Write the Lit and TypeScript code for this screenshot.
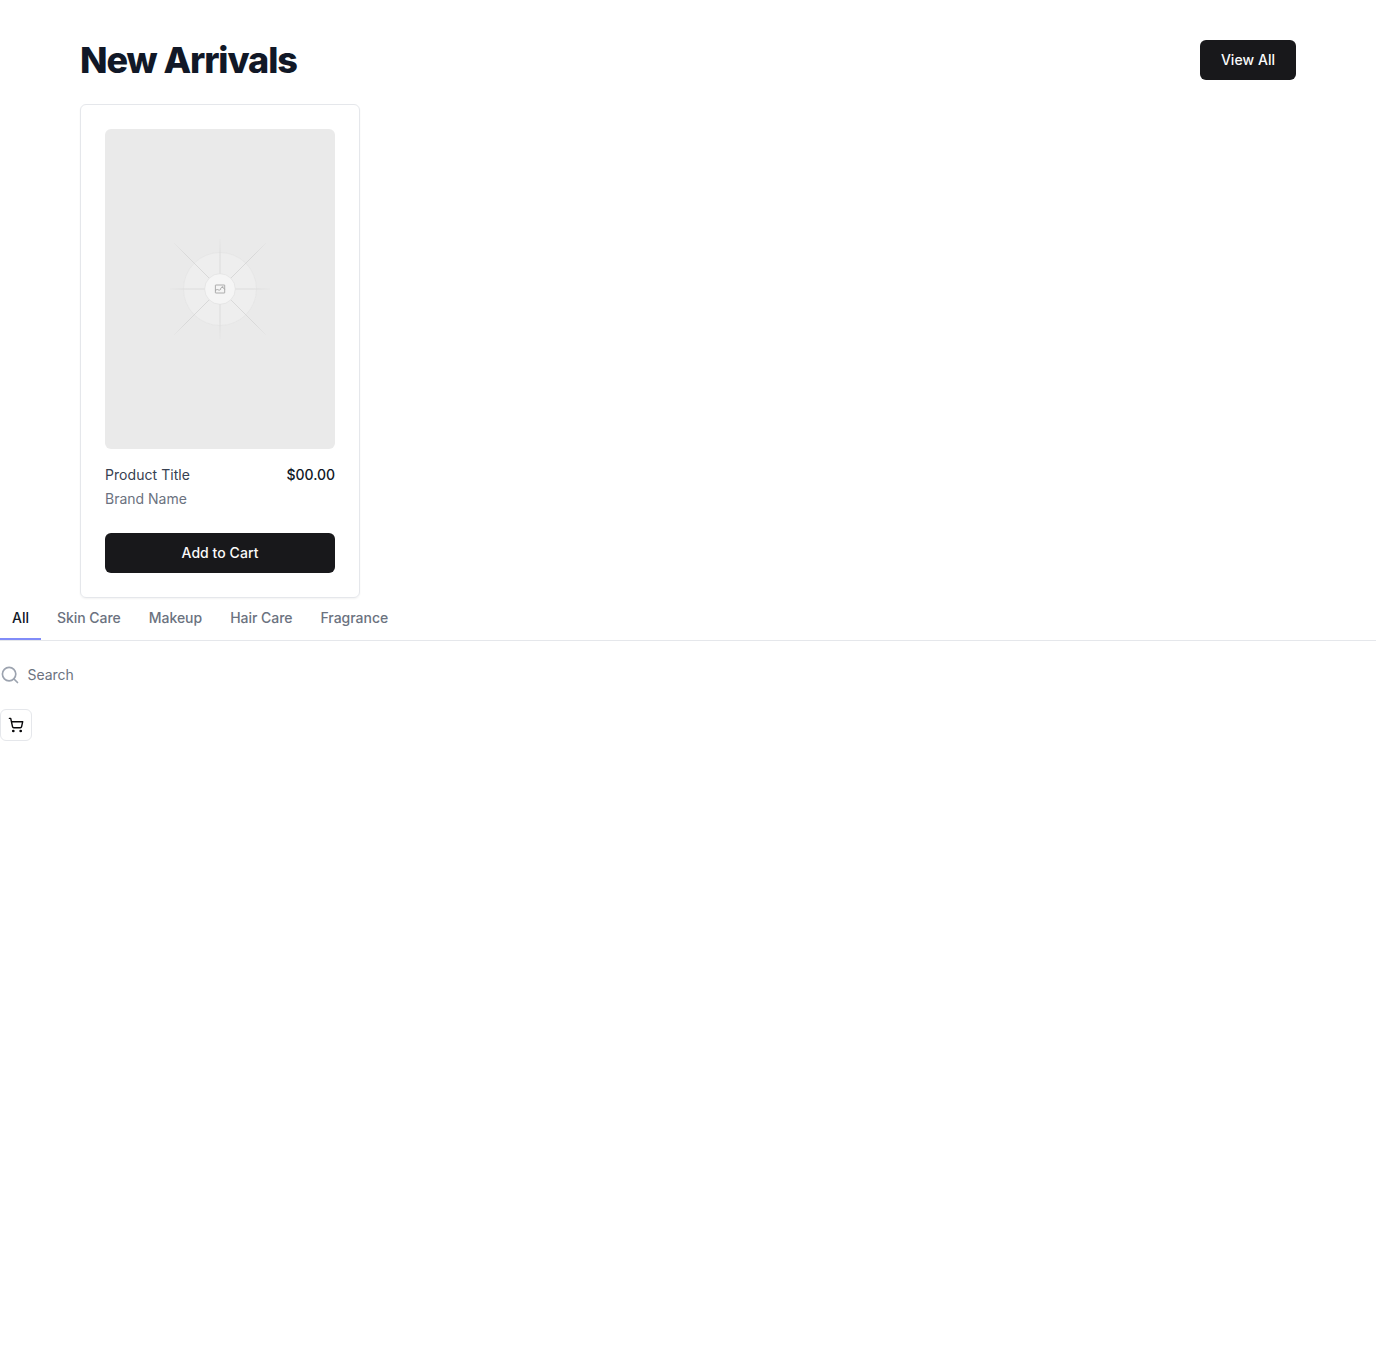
import { LitElement, html, svg, css } from "lit";
import { customElement, property } from "lit/decorators.js";
import { classMap } from "lit/directives/class-map.js";

const TABS = ["All", "Skin Care", "Makeup", "Hair Care", "Fragrance"];

// End points of the four guide lines, relative to the centre of the artwork.
const RAYS = [
  [-50, 0, 50, 0],
  [0, -50, 0, 50],
  [-46, -46, 46, 46],
  [-46, 46, 46, -46],
];

@customElement("product-placeholder")
class ProductPlaceholder extends LitElement {
  static styles = css`
    :host { display: block; }
    .art { display: block; width: 100%; height: 320px; border-radius: 6px; background: #eaeaea; }
  `;
  render() {
    return html`
      <svg class="art" viewBox="-115 -160 230 320" fill="none">
        <defs>
          <radialGradient id="fade" gradientUnits="userSpaceOnUse" cx="0" cy="0" r="57">
            <stop offset="0" stop-color="#d4d4d4" />
            <stop offset="0.6" stop-color="#d7d7d7" />
            <stop offset="1" stop-color="#dcdcdc" stop-opacity="0" />
          </radialGradient>
          <radialGradient id="fade-diagonal" gradientUnits="userSpaceOnUse" cx="0" cy="0" r="70">
            <stop offset="0" stop-color="#d0d0d0" />
            <stop offset="0.7" stop-color="#d3d3d3" />
            <stop offset="1" stop-color="#d8d8d8" stop-opacity="0" />
          </radialGradient>
        </defs>
        <circle r="36.5" fill="#eeeeee" stroke="#e3e3e3" stroke-width="0.6" />
        ${RAYS.map(([a, b, c, d]) => svg`<line x1=${a} y1=${b} x2=${c} y2=${d} stroke=${b && a ? "url(#fade-diagonal)" : "url(#fade)"} stroke-width="0.75" />`)}
        <circle r="15.3" fill="#f5f5f5" stroke="#dedede" stroke-width="0.6" />
        <g stroke="#999" stroke-width="0.8">
          <rect x="-4.6" y="-4" width="9.3" height="8" rx="0.3" />
          <path d="M-4.6 1.2L-2.8 .5L-.8 1.2L.6 .5M.6 .5V-.4A1.8 1.8 0 0 1 3.8-.8L4.7 .5" />
          <path d="M1.8-2.2H3.4" />
        </g>
      </svg>
    `;
  }
}

@customElement("app-button")
class AppButton extends LitElement {
  static styles = css`
    :host { display: block; }
    .button {
      display: flex; align-items: center; justify-content: center;
      box-sizing: border-box; width: 100%; height: 40px; padding: 0 16px;
      border: 0; border-radius: 6px; background: #18181b; color: #fafafa;
      font: 500 14px/20px Inter, sans-serif; letter-spacing: 0.06px;
    }
  `;
  render() {
    return html`<button class="button"><slot></slot></button>`;
  }
}

@customElement("category-tabs")
class CategoryTabs extends LitElement {
  @property() active = "All";
  static styles = css`
    :host { display: block; }
    .tabs { display: flex; gap: 4px; height: 42px; border-bottom: 1px solid #e5e7eb; }
    .tab {
      box-sizing: border-box; height: 42px; padding: 10px 12px 10px;
      border: 0; border-bottom: 2px solid transparent; background: none;
      color: #6b7280; font: 500 14px/20px Inter, sans-serif; letter-spacing: -0.03px;
    }
    .active { color: #111827; border-bottom-color: #818cf8; }
  `;
  render() {
    return html`<nav class="tabs">
      ${TABS.map((t) => html`<button class=${classMap({ tab: true, active: t === this.active })}>${t}</button>`)}
    </nav>`;
  }
}

@customElement("app-root")
class AppRoot extends LitElement {
  static styles = css`
    :host { display: block; min-height: 1366px; background: #fff; color: #111827; font: 14px/20px Inter, sans-serif; }
    .arrivals { padding: 40px 80px 0; }
    .heading { display: flex; justify-content: space-between; align-items: center; }
    .title { margin: 0; font: 800 36px/40px Inter, sans-serif; letter-spacing: -1.08px; }
    .view { width: 96px; }
    .card {
      box-sizing: border-box; width: 280px; height: 494px; margin-top: 24px; padding: 24px;
      border: 1px solid #e5e7eb; border-radius: 6px; box-shadow: 0 1px 2px rgba(0, 0, 0, 0.05);
    }
    .row { display: flex; justify-content: space-between; margin-top: 16px; }
    .name { color: #374151; letter-spacing: 0.05px; }
    .price { font-weight: 500; letter-spacing: -0.04px; }
    .brand { margin: 4px 0 24px; color: #6b7280; }
    .search { display: flex; align-items: center; height: 20px; margin-top: 24px; gap: 7.5px; color: #6b7280; letter-spacing: -0.04px; }
    .glass { width: 20px; height: 20px; color: #9ca3af; }
    .cart {
      display: flex; align-items: center; justify-content: center; box-sizing: border-box;
      width: 32px; height: 32px; margin-top: 24px; padding: 0;
      border: 1px solid #e5e7eb; border-radius: 6px; background: #fff; color: #09090b;
    }
    .cart-icon { width: 16px; height: 16px; }
  `;
  render() {
    return html`
      <section class="arrivals">
        <header class="heading">
          <h2 class="title">New Arrivals</h2>
          <app-button class="view">View All</app-button>
        </header>
        <article class="card">
          <product-placeholder></product-placeholder>
          <div class="row"><span class="name">Product Title</span><span class="price">$00.00</span></div>
          <p class="brand">Brand Name</p>
          <app-button>Add to Cart</app-button>
        </article>
      </section>
      <category-tabs></category-tabs>
      <div class="search">
        <svg class="glass" viewBox="0 0 20 20" fill="none" stroke="currentColor" stroke-width="1.67" stroke-linecap="round">
          <circle cx="9.1" cy="9.1" r="6.7" /><path d="M14 14l3.5 3.5" />
        </svg>
        <span>Search</span>
      </div>
      <button class="cart" aria-label="Cart">
        <svg class="cart-icon" viewBox="0 0 16 16" fill="none" stroke="currentColor" stroke-width="1.4" stroke-linecap="round" stroke-linejoin="round">
          <path d="M1.4 1.4H2.7L4.5 9.7A1.3 1.3 0 0 0 5.8 10.7H12.3A1.3 1.3 0 0 0 13.6 9.7L14.7 4.7H3.4" />
          <circle cx="5.3" cy="14" r=".67" /><circle cx="12.7" cy="14" r=".67" />
        </svg>
      </button>
    `;
  }
}
